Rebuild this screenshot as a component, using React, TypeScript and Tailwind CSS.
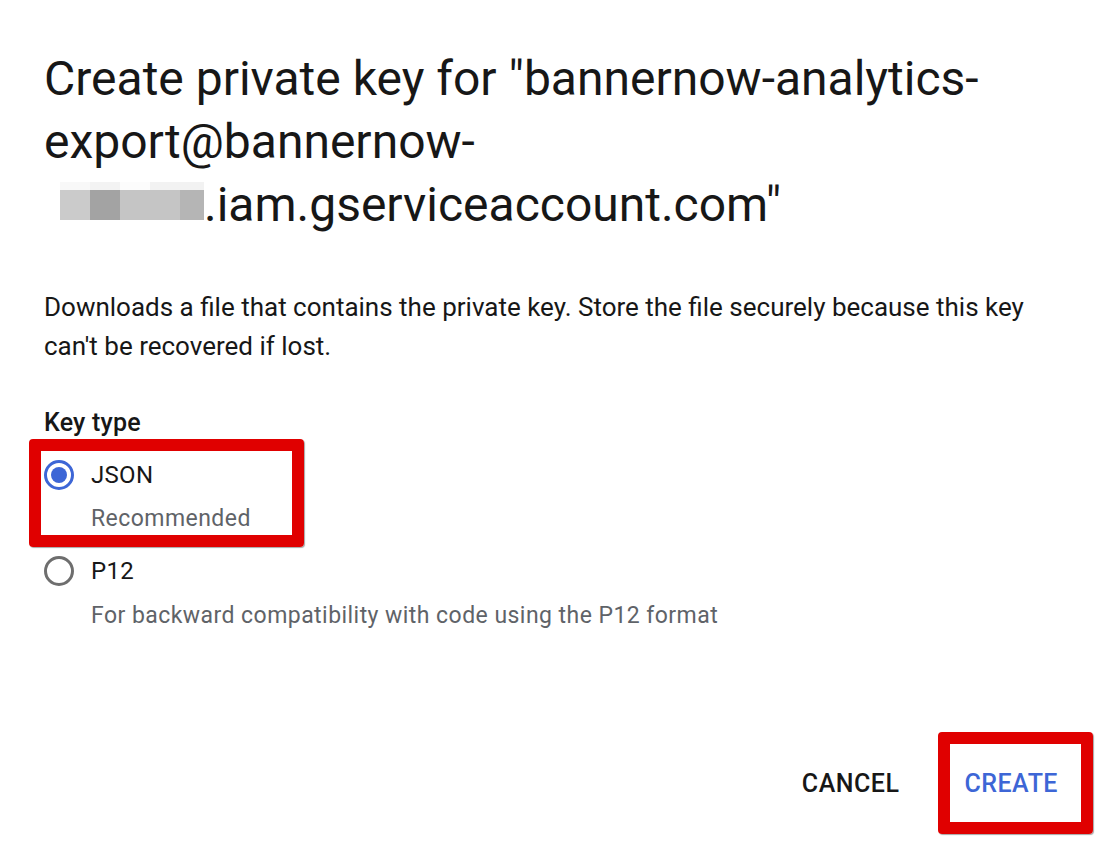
import React from "react";

function Radio({ checked }: { checked: boolean }) {
  return (
    <div className="h-[32px] w-[30px] flex items-center shrink-0">
      {checked ? (
        <div className="w-[30px] h-[30px] rounded-full border-[3px] border-[#3d66d6] flex items-center justify-center">
          <div className="w-[16px] h-[16px] rounded-full bg-[#3d66d6]" />
        </div>
      ) : (
        <div className="w-[30px] h-[30px] rounded-full border-[3px] border-[#6e6e6e]" />
      )}
    </div>
  );
}

function Blur() {
  const top = ["bg-[#f8f8f8]", "bg-[#f3f3f3]", "bg-[#fcfcfc]", "bg-[#f2f2f2]", "bg-[#f2f2f2]"];
  const main = ["bg-[#cbcbcb]", "bg-[#a3a3a3]", "bg-[#c5c5c5]", "bg-[#c5c5c5]", "bg-[#b5b5b5]"];
  return (
    <span className="inline-block overflow-hidden align-baseline ml-[16px] mb-[1px] w-[144px] h-[38px]">
      <span className="grid grid-cols-[30px_30px_30px_30px_24px] grid-rows-[8px_30px] w-[144px] h-[38px]">
        {top.map((c, i) => (
          <span key={"t" + i} className={c} />
        ))}
        {main.map((c, i) => (
          <span key={"m" + i} className={c} />
        ))}
      </span>
    </span>
  );
}

export default function App() {
  return (
    <div
      className="w-[1114px] h-[850px] bg-white flex flex-col text-[#171717] overflow-hidden"
      style={{ fontFamily: "Roboto, 'Noto Sans', sans-serif" }}
    >
      <div className="px-[44px] pt-[47px]">
        <h1 className="text-[48px] leading-[63px] font-normal whitespace-nowrap">
          Create private key for "bannernow-analytics-
          <br />
          export@bannernow-
          <br />
          <Blur />.iam.gserviceaccount.com"
        </h1>

        <p className="mt-[52px] text-[26px] leading-[39px]">
          Downloads a file that contains the private key. Store the file securely because this key can't be recovered if lost.
        </p>

        <div className="mt-[41px] text-[25px] leading-[32px] font-medium tracking-[0.2px]">Key type</div>

        <div className="relative mt-[20px] flex gap-[17px]">
          <div className="absolute left-[-15px] top-[-20px] w-[275px] h-[108px] border-[12px] border-[#e00000] rounded-[4px] shadow-[1px_1px_1px_rgba(0,0,0,0.35)] pointer-events-none" />
          <Radio checked />
          <div className="flex flex-col">
            <div className="text-[24px] leading-[32px] tracking-[0.3px]">JSON</div>
            <div className="mt-[13px] text-[23px] leading-[30px] tracking-[0.45px] text-[#5f6368]">Recommended</div>
          </div>
        </div>

        <div className="mt-[21px] flex gap-[17px]">
          <Radio checked={false} />
          <div className="flex flex-col">
            <div className="text-[24px] leading-[32px] tracking-[0.3px]">P12</div>
            <div className="mt-[14px] text-[23px] leading-[30px] tracking-[0.45px] text-[#5f6368]">
              For backward compatibility with code using the P12 format
            </div>
          </div>
        </div>
      </div>

      <div className="mt-auto flex justify-end items-center gap-[65px] pr-[56px] pb-[50px]">
        <button className="text-[25px] leading-[32px] font-medium tracking-[0.5px] text-[#171717]">CANCEL</button>
        <div className="relative">
          <div className="absolute left-[-26px] top-[-36px] w-[155px] h-[102px] border-[12px] border-[#e00000] rounded-[4px] shadow-[1px_1px_1px_rgba(0,0,0,0.35)] pointer-events-none" />
          <button className="text-[25px] leading-[32px] font-medium tracking-[0.5px] text-[#3d66d6]">CREATE</button>
        </div>
      </div>
    </div>
  );
}
